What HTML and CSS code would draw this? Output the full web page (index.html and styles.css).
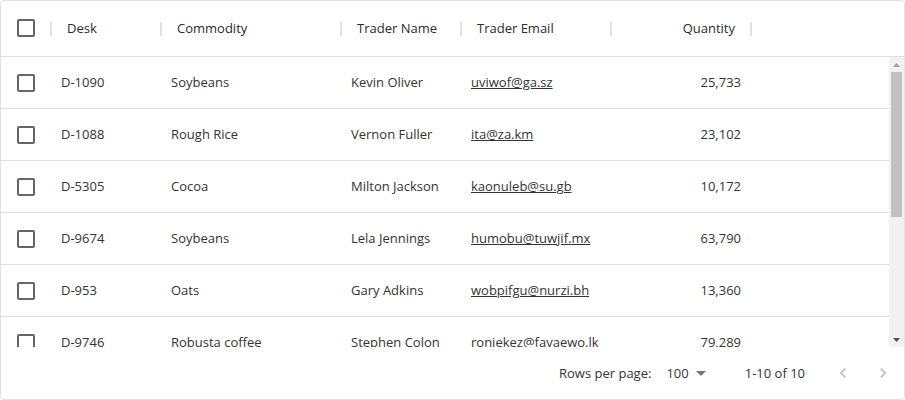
FILE: index.html
```html
<!DOCTYPE html>
<html lang="en">
<head>
<meta charset="utf-8">
<title>Data Grid</title>
<link rel="stylesheet" href="styles.css">
</head>
<body>
<div class="grid">
  <div class="header">
    <div class="hcell col-check"><span class="checkbox"></span><span class="sep"></span></div>
    <div class="hcell col-desk"><span class="htitle">Desk</span><span class="sep"></span></div>
    <div class="hcell col-commodity"><span class="htitle">Commodity</span><span class="sep"></span></div>
    <div class="hcell col-name"><span class="htitle">Trader Name</span><span class="sep"></span></div>
    <div class="hcell col-email"><span class="htitle">Trader Email</span><span class="sep"></span></div>
    <div class="hcell col-qty right"><span class="htitle">Quantity</span><span class="sep"></span></div>
  </div>
  <div class="viewport">
    <div class="rows">
      <div class="row"><div class="cell col-check"><span class="checkbox"></span></div><div class="cell col-desk">D-1090</div><div class="cell col-commodity">Soybeans</div><div class="cell col-name">Kevin Oliver</div><div class="cell col-email"><a class="email">uviwof@ga.sz</a></div><div class="cell col-qty right">25,733</div></div>
      <div class="row"><div class="cell col-check"><span class="checkbox"></span></div><div class="cell col-desk">D-1088</div><div class="cell col-commodity">Rough Rice</div><div class="cell col-name">Vernon Fuller</div><div class="cell col-email"><a class="email">ita@za.km</a></div><div class="cell col-qty right">23,102</div></div>
      <div class="row"><div class="cell col-check"><span class="checkbox"></span></div><div class="cell col-desk">D-5305</div><div class="cell col-commodity">Cocoa</div><div class="cell col-name">Milton Jackson</div><div class="cell col-email"><a class="email">kaonuleb@su.gb</a></div><div class="cell col-qty right">10,172</div></div>
      <div class="row"><div class="cell col-check"><span class="checkbox"></span></div><div class="cell col-desk">D-9674</div><div class="cell col-commodity">Soybeans</div><div class="cell col-name">Lela Jennings</div><div class="cell col-email"><a class="email">humobu@tuwjif.mx</a></div><div class="cell col-qty right">63,790</div></div>
      <div class="row"><div class="cell col-check"><span class="checkbox"></span></div><div class="cell col-desk">D-953</div><div class="cell col-commodity">Oats</div><div class="cell col-name">Gary Adkins</div><div class="cell col-email"><a class="email">wobpifgu@nurzi.bh</a></div><div class="cell col-qty right">13,360</div></div>
      <div class="row"><div class="cell col-check"><span class="checkbox"></span></div><div class="cell col-desk">D-9746</div><div class="cell col-commodity">Robusta coffee</div><div class="cell col-name">Stephen Colon</div><div class="cell col-email"><a class="email">roniekez@favaewo.lk</a></div><div class="cell col-qty right">79,289</div></div>
      <div class="row"><div class="cell col-check"><span class="checkbox"></span></div><div class="cell col-desk">D-4412</div><div class="cell col-commodity">Wheat</div><div class="cell col-name">Clara Hughes</div><div class="cell col-email"><a class="email">fepoze@ril.ph</a></div><div class="cell col-qty right">41,508</div></div>
      <div class="row"><div class="cell col-check"><span class="checkbox"></span></div><div class="cell col-desk">D-2870</div><div class="cell col-commodity">Sugar No.11</div><div class="cell col-name">Derek Lane</div><div class="cell col-email"><a class="email">wiruv@kobte.cn</a></div><div class="cell col-qty right">8,215</div></div>
      <div class="row"><div class="cell col-check"><span class="checkbox"></span></div><div class="cell col-desk">D-6631</div><div class="cell col-commodity">Corn</div><div class="cell col-name">Ida Moreno</div><div class="cell col-email"><a class="email">joveh@uzi.ge</a></div><div class="cell col-qty right">57,046</div></div>
      <div class="row"><div class="cell col-check"><span class="checkbox"></span></div><div class="cell col-desk">D-3159</div><div class="cell col-commodity">Cotton No.2</div><div class="cell col-name">Hattie Price</div><div class="cell col-email"><a class="email">zumaso@ok.lr</a></div><div class="cell col-qty right">36,921</div></div>
    </div>
    <div class="scrollbar">
      <div class="sb-btn"><svg viewBox="0 0 7 4" width="7" height="4"><path d="M0 4 3.5 0 7 4z" fill="#a3a3a3"/></svg></div>
      <div class="sb-track"><div class="sb-thumb"></div></div>
      <div class="sb-btn"><svg viewBox="0 0 7 4" width="7" height="4"><path d="M0 0 7 0 3.5 4z" fill="#505050"/></svg></div>
    </div>
  </div>
  <div class="footer">
    <span class="label">Rows per page:</span>
    <span class="select">100<svg class="drop" viewBox="0 0 24 24" width="24" height="24"><path d="M7 10l5 5 5-5z"/></svg></span>
    <span class="range">1-10 of 10</span>
    <span class="iconbtn"><svg viewBox="0 0 24 24" width="20" height="20"><path d="M15.41 7.41 14 6l-6 6 6 6 1.41-1.41L10.83 12z"/></svg></span>
    <span class="iconbtn"><svg viewBox="0 0 24 24" width="20" height="20"><path d="M10 6 8.59 7.41 13.17 12l-4.58 4.59L10 18l6-6z"/></svg></span>
  </div>
</div>
</body>
</html>
```
FILE: styles.css
```css
* { box-sizing: border-box; }
html, body { margin: 0; padding: 0; background: #fff; }
body {
  font-family: "Open Sans", "Lato", sans-serif;
  font-size: 13px;
  color: #333;
}
.grid {
  width: 905px;
  height: 400px;
  border: 1px solid #e0e0e0;
  border-radius: 4px;
  display: flex;
  flex-direction: column;
  overflow: hidden;
}
.header {
  height: 56px;
  flex: none;
  display: flex;
  border-bottom: 1px solid #e0e0e0;
}
.hcell {
  position: relative;
  display: flex;
  align-items: center;
  padding: 0 16px 2px;
  font-weight: 500;
  color: #2b2b2b;
}
.hcell.col-check { justify-content: center; padding: 0 0 2px; }
.hcell.right { justify-content: flex-end; }
.sep {
  position: absolute;
  right: -1px;
  top: 21px;
  width: 2px;
  height: 14px;
  background: #e0e0e0;
}
.col-check { width: 50px; flex: none; }
.col-desk { width: 110px; flex: none; }
.col-commodity { width: 180px; flex: none; }
.col-name { width: 120px; flex: none; }
.col-email { width: 150px; flex: none; }
.col-qty { width: 140px; flex: none; }
.viewport {
  height: 290px;
  flex: none;
  display: flex;
  overflow: hidden;
}
.rows {
  flex: 1;
  overflow: hidden;
}
.row {
  display: flex;
  height: 52px;
  border-bottom: 1px solid #e0e0e0;
}
.cell {
  display: flex;
  align-items: center;
  padding: 0 10px 1px;
  white-space: nowrap;
  overflow: hidden;
}
.cell.col-check { justify-content: center; padding: 0; }
.cell.right { justify-content: flex-end; }
.checkbox {
  display: block;
  width: 18px;
  height: 18px;
  border: 2px solid #666;
  border-radius: 2px;
}
.email {
  color: #333;
  text-decoration: underline;
}
.scrollbar {
  width: 15px;
  flex: none;
  background: #f1f1f1;
  display: flex;
  flex-direction: column;
}
.sb-btn {
  height: 15px;
  flex: none;
  display: flex;
  align-items: center;
  justify-content: center;
}
.sb-track {
  flex: 1;
  padding: 0 2px;
}
.sb-thumb {
  height: 145px;
  background: #c1c1c1;
}
.footer {
  flex: 1;
  display: flex;
  align-items: center;
  justify-content: flex-end;
  padding-right: 1px;
  padding-bottom: 1px;
  color: #333;
}
.label { margin-right: 15px; }
.select {
  display: flex;
  align-items: center;
}
.drop { fill: #757575; margin-right: -7px; }
.range { margin-left: 39px; margin-right: 18px; }
.iconbtn {
  width: 40px;
  height: 40px;
  display: flex;
  align-items: center;
  justify-content: center;
}
.iconbtn svg { fill: #bdbdbd; }
```
